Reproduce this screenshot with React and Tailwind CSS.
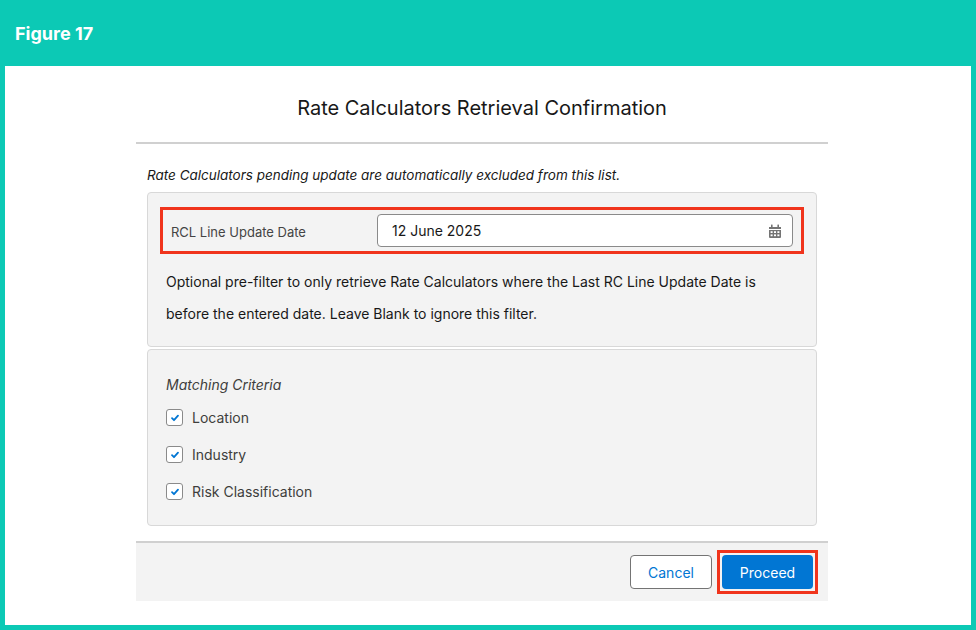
const font = { fontFamily: 'Inter, "Liberation Sans", sans-serif' };

function Check({ label }) {
  return (
    <div className="flex items-center gap-[9px] h-[37px] text-[14px] text-[#3e3e3c]">
      <span className="w-[17px] h-[17px] rounded-[3px] border border-[#8a8a8a] bg-white flex items-center justify-center">
        <svg width="10" height="10" viewBox="0 0 10 10">
          <path d="M2 5.2l2 2 4-4.5" fill="none" stroke="#0176d3" strokeWidth="1.8" strokeLinecap="round" strokeLinejoin="round" />
        </svg>
      </span>
      {label}
    </div>
  );
}

export default function App() {
  return (
    <div className="w-[976px] h-[630px] bg-[#0cc9b5] p-[5px] pt-0 flex flex-col" style={font}>
      <div className="h-[66px] flex items-center pl-[10px] text-white font-bold text-[18px]">Figure 17</div>
      <div className="flex-1 bg-white flex justify-center">
        <div className="w-[692px] ml-[-12px] flex flex-col">
          <div className="h-[78px] flex items-end justify-center pb-[19px] text-[20px] text-[#181818] border-b-2 border-[#d0d0d0]">
            Rate Calculators Retrieval Confirmation
          </div>
          <div className="px-[11px] pt-[22px] pb-[15px] flex flex-col">
            <div className="italic text-[13.5px] text-[#181818] mb-[8px] leading-[18px]">
              Rate Calculators pending update are automatically excluded from this list.
            </div>
            <div className="bg-[#f3f3f3] border border-[#d8d8d8] rounded-[4px] h-[155px] px-[12px] pt-[14px]">
              <div className="border-[3px] border-[#f0341c] h-[47px] flex items-center pl-[8px] pr-[8px]">
                <span className="text-[13px] text-[#444] w-[206px] mt-[5px]">RCL Line Update Date</span>
                <div className="flex-1 h-[33px] bg-white border border-[#8a8a8a] rounded-[4px] flex items-center justify-between pl-[14px] pr-[10px] text-[14px] text-[#181818]">
                  12 June 2025
                  <svg width="14" height="14" viewBox="0 0 14 14" fill="#747474">
                    <rect x="3" y="0.5" width="1.6" height="3" rx="0.5" />
                    <rect x="9.4" y="0.5" width="1.6" height="3" rx="0.5" />
                    <path d="M1 3h12v2H1z" />
                    <path d="M1 6h12v7a1 1 0 01-1 1H2a1 1 0 01-1-1z" />
                    <g fill="#fff">
                      <rect x="2.6" y="7.2" width="2" height="1.8" /><rect x="6" y="7.2" width="2" height="1.8" /><rect x="9.4" y="7.2" width="2" height="1.8" />
                      <rect x="2.6" y="10.4" width="2" height="1.8" /><rect x="6" y="10.4" width="2" height="1.8" /><rect x="9.4" y="10.4" width="2" height="1.8" />
                    </g>
                  </svg>
                </div>
              </div>
              <p className="text-[14px] text-[#181818] leading-[32px] mt-[12px] pl-[6px]">
                Optional pre-filter to only retrieve Rate Calculators where the Last RC Line Update Date is<br />
                before the entered date. Leave Blank to ignore this filter.
              </p>
            </div>
            <div className="bg-[#f3f3f3] border border-[#d8d8d8] rounded-[4px] h-[177px] mt-[2px] px-[18px] pt-[24px]">
              <div className="italic text-[14px] text-[#3e3e3c] mb-[4px]">Matching Criteria</div>
              <Check label="Location" />
              <Check label="Industry" />
              <Check label="Risk Classification" />
            </div>
          </div>
          <div className="bg-[#f3f3f3] border-t-2 border-[#d0d0d0] h-[60px] flex items-center justify-end gap-[5px] pr-[10px]">
            <button className="w-[82px] h-[34px] bg-white border border-[#747474] rounded-[4px] text-[14px] text-[#0176d3]">Cancel</button>
            <div className="border-[3px] border-[#f0341c] p-[2px]">
              <button className="w-[91px] h-[34px] bg-[#0176d3] rounded-[4px] text-[14px] text-white">Proceed</button>
            </div>
          </div>
        </div>
      </div>
    </div>
  );
}
